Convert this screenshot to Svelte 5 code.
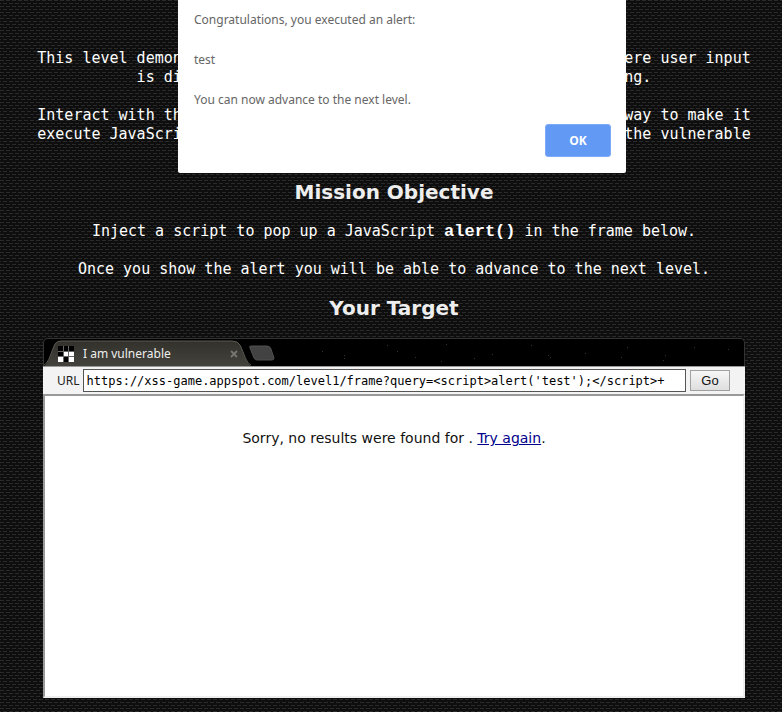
<script>
  let url = $state("https://xss-game.appspot.com/level1/frame?query=<script>alert('test');<\/script>+");
  const stars = [[278,12],[300,16],[300,19],[343,6],[353,12],[371,18],[397,22],[402,5],[430,19],[448,15],[487,6],[504,16],[506,18],[541,14],[577,18],[583,8],[619,21],[621,16],[650,8],[684,10]];
</script>

<div class="page">
  <main>
    <div class="intro">
      <p>This level demonstrates a common cause of cross-site scripting where user input<br />is directly included in the page without proper escaping.</p>
      <p>Interact with the vulnerable application window below and find a way to make it<br />execute JavaScript of your choosing. You can take actions inside the vulnerable<br />window or directly edit its URL bar.</p>
    </div>
    <h2>Mission Objective</h2>
    <p>Inject a script to pop up a JavaScript <code>alert()</code> in the frame below.</p>
    <p>Once you show the alert you will be able to advance to the next level.</p>
    <h2>Your Target</h2>

    <section class="browser">
      <div class="tabs">
        <svg class="stars" aria-hidden="true">
          {#each stars as [x, y]}<rect {x} {y} width="1" height="1" fill="#333" />{/each}
        </svg>
        <svg class="shape" width="240" height="28" viewBox="0 0 240 28" aria-hidden="true">
          <defs>
            <linearGradient id="tab" x2="0" y2="1"><stop stop-color="#32312c" /><stop offset="1" stop-color="#43423c" /></linearGradient>
          </defs>
          <path d="M0 28C5 26 7 14 11 6Q13 3 17 3H188Q194 3 196 7C200 15 202 25 207 28Z" fill="url(#tab)" />
          <path d="M0 27C5 25 7 14 11 6Q13 3 17 3H188Q194 3 196 7C200 15 202 25 207 27" fill="none" stroke="#5a5952" />
          <path d="M207 8H223Q226 8 227 11L230 20Q230 22 228 22H213Q211 22 210 20L206 10Q205 8 207 8Z" fill="#424242" stroke="#505050" />
        </svg>
        <div class="tab">
          <svg width="16" height="16" viewBox="0 0 16 16" aria-hidden="true">
            <rect width="16" height="16" fill="#666" />
            <path d="M0 0h5v5H0zM6 0h4v5H6zM11 0h5v5h-5zM0 6h5v4H0zM6 11h4v5H6z" fill="#000" />
            <path d="M6 6h4v4H6zM11 6h5v4h-5zM0 11h5v5H0zM11 11h5v5h-5z" fill="#fff" />
          </svg>
          <span>I am vulnerable</span>
          <button class="close" aria-label="Close tab"><svg width="8" height="8" viewBox="0 0 8 8"><path d="M1 1L7 7M7 1L1 7" stroke="#77766f" stroke-width="1.8" /></svg></button>
        </div>
      </div>
      <form class="bar" onsubmit={(e) => e.preventDefault()}>
        <label for="url">URL</label>
        <input id="url" type="text" bind:value={url} />
        <button>Go</button>
      </form>
      <div class="view">Sorry, no results were found for <b></b>. <a href="#again">Try again</a>.</div>
    </section>
  </main>

  <div class="dialog" role="alertdialog" aria-label="Alert">
    <p>Congratulations, you executed an alert:</p>
    <p>test</p>
    <p>You can now advance to the next level.</p>
    <button>OK</button>
  </div>
</div>

<style>
  :global(body) { margin: 0; background: #0f0f0f; }
  .page {
    box-sizing: border-box;
    position: relative;
    min-height: 100vh;
    padding: 49px 37px 14px 43px;
    background-color: #0e0e0e;
    background-image:
      conic-gradient(from 270deg at 4px 1px, #2b2b2b 90deg, transparent 0),
      conic-gradient(from 270deg at 4px 1px, #2b2b2b 90deg, transparent 0);
    background-size: 6px 6px;
    background-position: 0 0, 3px 3px;
  }
  main { color: #fff; text-align: center; font: 15px/19px "DejaVu Sans Mono", monospace; }
  main p { margin: 0 0 19px; }
  .intro { margin: 0 -8px; white-space: nowrap; }
  code { font: bold 17px/19px "Liberation Mono", monospace; }
  h2 { margin: 0 0 20px; font: bold 20px/20px "DejaVu Sans", sans-serif; color: #eee; }
  .browser { text-align: left; }
  .tabs { position: relative; box-sizing: border-box; height: 28px; background: #000; border: 1px solid #333; border-bottom: 0; border-radius: 5px 5px 0 0; }
  .stars { position: absolute; inset: 0; width: 100%; height: 100%; }
  .shape { position: absolute; left: 0; top: -1px; }
  .tab { position: relative; display: flex; align-items: center; gap: 9px; width: 180px; padding: 7px 0 0 14px; color: #eee; font: 12px/16px "Noto Sans", sans-serif; }
  .close { margin-left: auto; padding: 0; border: 0; background: none; display: flex; }
  .bar { box-sizing: border-box; display: flex; align-items: center; height: 28px; gap: 3px; padding: 0 15px 0 14px; background: #f3f3f3; color: #222; border-top: 1px solid #999; font: 12px/16px "Noto Sans", sans-serif; }
  .bar input { flex: 1; min-width: 0; box-sizing: border-box; height: 23px; padding: 0 3px; border: 1px solid #555; border-radius: 0; background: #fff; color: #000; font: 12px/16px "DejaVu Sans Mono", monospace; }
  .bar button { width: 40px; height: 21px; margin-left: 1px; padding: 0; border: 1px solid #a0a0a0; background: linear-gradient(#f6f6f6, #dedede); color: #111; font: 13px/16px "Liberation Sans", sans-serif; }
  .view { box-sizing: border-box; height: 304px; padding-top: 33px; border: 2px solid #eee; border-top-color: #999; border-left-color: #999; background: #fff; color: #111; text-align: center; font: 14px/18px "DejaVu Sans", sans-serif; }
  .view a { color: #00008b; }
  .dialog { position: absolute; top: 0; left: 178px; right: 156px; box-sizing: border-box; display: flex; flex-direction: column; padding: 10px 15px 16px 16px; background: #fff; border-radius: 0 0 2px 2px; color: #666; font: 12px/20px "Noto Sans", sans-serif; }
  .dialog p { margin: 0 0 20px; }
  .dialog button { align-self: flex-end; width: 66px; height: 33px; margin-top: -6px; padding: 0; border: 1px solid #7eabf8; border-radius: 3px; background: #6199f5; color: #fff; font: bold 12px/20px "Open Sans", sans-serif; }
</style>
